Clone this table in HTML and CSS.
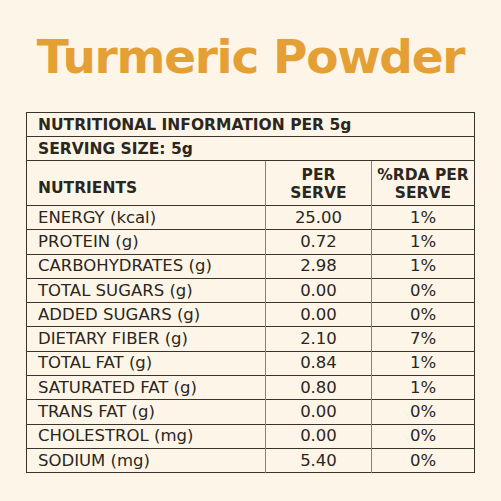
FILE: index.html
```html
<!DOCTYPE html>
<html lang="en">
<head>
    <meta charset="UTF-8">
    <title>Turmeric Powder</title>
    <link rel="stylesheet" href="styles.css">
</head>
<body>

    <h1>Turmeric Powder</h1>

    <table class="nutrition">
        <tr><th colspan="3" class="wide">NUTRITIONAL INFORMATION PER 5g</th></tr>
        <tr><th colspan="3" class="wide">SERVING SIZE: 5g</th></tr>
        <tr class="head">
            <th class="name">NUTRIENTS</th>
            <th>PER<br>SERVE</th>
            <th>%RDA PER<br>SERVE</th>
        </tr>
        <tr><td class="name">ENERGY (kcal)</td><td>25.00</td><td>1%</td></tr>
        <tr><td class="name">PROTEIN (g)</td><td>0.72</td><td>1%</td></tr>
        <tr><td class="name">CARBOHYDRATES (g)</td><td>2.98</td><td>1%</td></tr>
        <tr><td class="name">TOTAL SUGARS (g)</td><td>0.00</td><td>0%</td></tr>
        <tr><td class="name">ADDED SUGARS (g)</td><td>0.00</td><td>0%</td></tr>
        <tr><td class="name">DIETARY FIBER (g)</td><td>2.10</td><td>7%</td></tr>
        <tr><td class="name">TOTAL FAT (g)</td><td>0.84</td><td>1%</td></tr>
        <tr><td class="name">SATURATED FAT (g)</td><td>0.80</td><td>1%</td></tr>
        <tr><td class="name">TRANS FAT (g)</td><td>0.00</td><td>0%</td></tr>
        <tr><td class="name">CHOLESTROL (mg)</td><td>0.00</td><td>0%</td></tr>
        <tr><td class="name">SODIUM (mg)</td><td>5.40</td><td>0%</td></tr>
    </table>

</body>
</html>
```

FILE: styles.css
```css
*{
    margin: 0px;
    padding: 0px;
    box-sizing: border-box;
}
body {
    font-family: "DejaVu Sans", sans-serif;
    background-color: #fdf6e8;
    color: #2b2620;
    width: 501px;
    height: 501px;
    display: flex;
    flex-direction: column;
    align-items: center;
    padding-top: 30px;
}
h1 {
    color: #e4a035;
    font-size: 47px;
    font-weight: bold;
    letter-spacing: -1.3px;
    line-height: 54px;
    margin-bottom: 28px;
}
.nutrition {
    width: 449px;
    border-collapse: collapse;
    border: 1.5px solid #3a342c;
    font-size: 16.5px;
}
.nutrition th, .nutrition td {
    border-top: 1.5px solid #3a342c;
    height: 24.3px;
    padding: 0px;
    text-align: center;
    line-height: 18px;
}
.nutrition td + td, .nutrition th + th {
    border-left: 1.5px solid #8a8070;
}
.nutrition th {
    font-weight: 600;
    font-size: 15.5px;
}
.nutrition tr:first-child th, .nutrition tr:nth-child(2) th {
    height: 24px;
}
.nutrition .wide, .nutrition .name {
    text-align: left;
    padding-left: 11px;
}
.nutrition .name {
    width: 239px;
}
.nutrition .head th {
    height: 45px;
    padding-top: 2px;
}
.nutrition .head .name {
    padding-top: 10px;
}
.nutrition td:last-child {
    width: 103px;
}
```
